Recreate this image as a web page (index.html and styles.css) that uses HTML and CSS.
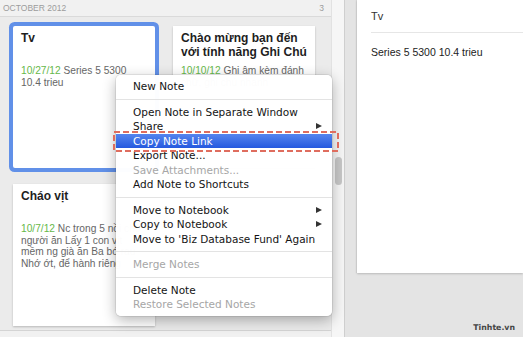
FILE: index.html
```html
<!DOCTYPE html>
<html lang="vi">
<head>
    <meta charset="UTF-8">
    <meta name="viewport" content="width=device-width, initial-scale=1.0">
    <title>Ghi Chú</title>
    <link rel="stylesheet" href="styles.css">
</head>
<body>
    <div class="app">
        <div class="list">
            <div class="list-head">
                <span>OCTOBER 2012</span>
                <span>3</span>
            </div>
            <div class="cards">
                <div class="card selected">
                    <div class="card-title">Tv</div>
                    <p class="card-text"><span class="date">10/27/12</span> Series 5 5300 10.4 trieu</p>
                </div>
                <div class="card">
                    <div class="card-title">Chào mừng bạn đến với tính năng Ghi Chú</div>
                    <p class="card-text"><span class="date">10/10/12</span> Ghi âm kèm đánh chữ, ghi chú nhanh</p>
                </div>
                <div class="card">
                    <div class="card-title">Cháo vịt</div>
                    <p class="card-text"><span class="date">10/7/12</span> Nc trong 5 nồi cho<br>người ăn Lấy 1 con vịt<br>mềm ng già ăn Ba bó rau<br>Nhớ ớt, để hành riêng</p>
                </div>
            </div>
            <div class="list-foot"></div>
        </div>

        <div class="scroll">
            <div class="thumb"></div>
        </div>

        <div class="editor">
            <div class="note">
                <div class="note-title">Tv</div>
                <div class="note-body">Series 5 5300 10.4 trieu</div>
            </div>
        </div>
    </div>

    <!-- context menu -->
    <div class="menu">
        <div class="item">New Note</div>
        <div class="sep"></div>
        <div class="item">Open Note in Separate Window</div>
        <div class="item">Share <i class="arrow"></i></div>
        <div class="item active">Copy Note Link</div>
        <div class="item">Export Note...</div>
        <div class="item off">Save Attachments...</div>
        <div class="item">Add Note to Shortcuts</div>
        <div class="sep"></div>
        <div class="item">Move to Notebook <i class="arrow"></i></div>
        <div class="item">Copy to Notebook <i class="arrow"></i></div>
        <div class="item">Move to 'Biz Database Fund' Again</div>
        <div class="sep"></div>
        <div class="item off">Merge Notes</div>
        <div class="sep"></div>
        <div class="item">Delete Note</div>
        <div class="item off">Restore Selected Notes</div>
    </div>

    <svg class="mark" width="226" height="21" viewBox="0 0 226 21">
        <rect x="1" y="1" width="224" height="19" fill="none" stroke="#df6d5e" stroke-width="2" stroke-dasharray="6 3"/>
    </svg>

    <div class="watermark">Tinhte.vn</div>
</body>
</html>
```

FILE: styles.css
```css
body {
    margin: 0;
    width: 523px;
    height: 337px;
    overflow: hidden;
    position: relative;
    font-family: "Liberation Sans", Arial, sans-serif;
    background: #e4e4e4;
}
.app {
    display: flex;
    height: 337px;
}

/* note list */
.list {
    width: 331px;
    display: flex;
    flex-direction: column;
    background: #ebebeb;
}
.list-head {
    height: 16px;
    display: flex;
    justify-content: space-between;
    align-items: center;
    padding: 0 7px 0 3px;
    background: #f1f1f1;
    border-bottom: 1px solid #dadada;
    color: #9c9c9c;
    font-size: 8.5px;
}
.cards {
    flex: 1;
    display: grid;
    grid-template-columns: 142px 142px;
    grid-auto-rows: 142px;
    gap: 16px 18px;
    padding: 9px 0 0 13px;
    overflow: hidden;
}
.card {
    background: white;
    padding: 5px 10px 0 8px;
    box-shadow: 0 1px 2px rgba(0, 0, 0, 0.22);
    overflow: hidden;
}
.card.selected {
    border-radius: 2px;
    box-shadow: 0 0 0 4px #6190e8;
}
.card-title {
    height: 28px;
    margin: 0 -6px 6px 0;
    font-size: 12px;
    line-height: 14px;
    font-weight: bold;
    color: #1e1e1e;
}
.card-text {
    margin: 0;
    font-size: 10.2px;
    line-height: 11.5px;
    color: #666;
}
.date {
    color: #66b84a;
}
.list-foot {
    height: 6px;
    border-top: 1px solid #d4d4d4;
    background: #f1f1f1;
}

/* scroll strip */
.scroll {
    width: 12px;
    background: #f6f6f6;
    border-left: 1px solid #e2e2e2;
    border-right: 1px solid #cfcfcf;
}
.thumb {
    width: 7px;
    height: 28px;
    margin: 157px 0 0 3px;
    border-radius: 4px;
    background: #c7c7c7;
}

/* editor */
.editor {
    flex: 1;
    padding-left: 12px;
}
.note {
    height: 273px;
    background: white;
    box-shadow: 0 1px 2px rgba(0, 0, 0, 0.18), -1px 0 1px rgba(0, 0, 0, 0.06);
}
.note-title {
    margin-left: 14px;
    padding: 9px 0;
    line-height: 14px;
    font-size: 11px;
    color: #333;
    border-bottom: 1px solid #e6e6e6;
}
.note-body {
    padding: 13px 0 0 14px;
    line-height: 12px;
    font-size: 10.5px;
    color: #222;
}

/* context menu */
.menu {
    position: absolute;
    left: 116px;
    top: 75px;
    width: 216px;
    padding: 4px 0;
    background: rgba(255, 255, 255, 0.98);
    border-radius: 5px;
    box-shadow: 0 4px 14px rgba(0, 0, 0, 0.3), 0 0 0 1px rgba(0, 0, 0, 0.07);
    font-family: "DejaVu Sans", sans-serif;
    font-size: 10.5px;
    color: #141414;
}
.item {
    height: 14.5px;
    line-height: 14.5px;
    padding: 0 10px 0 17px;
    display: flex;
    justify-content: space-between;
    align-items: center;
    white-space: nowrap;
}
.item.off {
    color: #a6a6a6;
}
.item.active {
    color: white;
    background: linear-gradient(#5585ee, #2459df);
}
.arrow {
    width: 0;
    height: 0;
    border-left: 6px solid #333;
    border-top: 3.5px solid transparent;
    border-bottom: 3.5px solid transparent;
}
.sep {
    height: 1px;
    margin: 5px 0;
    background: #e3e3e3;
}
.mark {
    position: absolute;
    left: 113px;
    top: 131px;
}
.watermark {
    position: absolute;
    right: 8px;
    bottom: 5px;
    font-family: "DejaVu Sans", sans-serif;
    font-size: 7.8px;
    font-weight: bold;
    color: #444;
}
```
